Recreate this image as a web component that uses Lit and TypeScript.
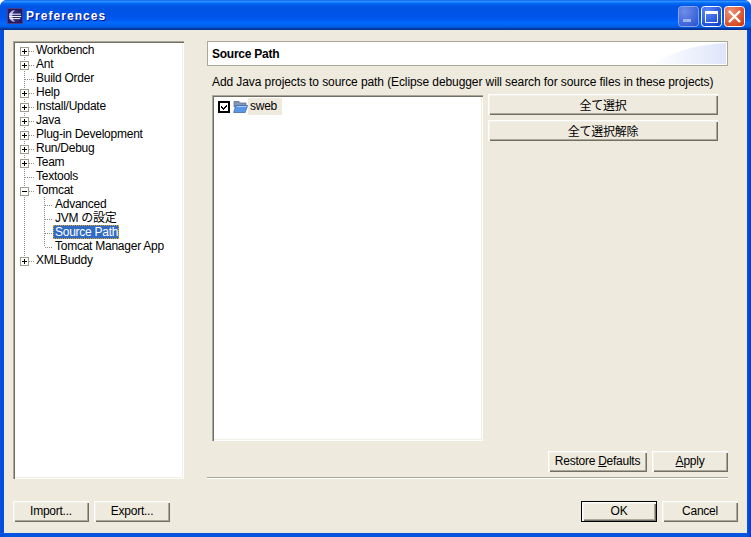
import { LitElement, html, css, svg } from "lit";
import { customElement } from "lit/decorators.js";

interface Row { label: string; level: number; kind: "plus" | "minus" | "leaf"; selected?: boolean; lastChild?: boolean; last?: boolean; first?: boolean }

const ROWS: Row[] = [
  { label: "Workbench", level: 0, kind: "plus", first: true },
  { label: "Ant", level: 0, kind: "plus" },
  { label: "Build Order", level: 0, kind: "leaf" },
  { label: "Help", level: 0, kind: "plus" },
  { label: "Install/Update", level: 0, kind: "plus" },
  { label: "Java", level: 0, kind: "plus" },
  { label: "Plug-in Development", level: 0, kind: "plus" },
  { label: "Run/Debug", level: 0, kind: "plus" },
  { label: "Team", level: 0, kind: "plus" },
  { label: "Textools", level: 0, kind: "leaf" },
  { label: "Tomcat", level: 0, kind: "minus" },
  { label: "Advanced", level: 1, kind: "leaf" },
  { label: "JVM の設定", level: 1, kind: "leaf" },
  { label: "Source Path", level: 1, kind: "leaf", selected: true },
  { label: "Tomcat Manager App", level: 1, kind: "leaf", lastChild: true },
  { label: "XMLBuddy", level: 0, kind: "plus", last: true },
];

function connector(r: Row) {
  const w = r.level === 0 ? 21 : 38;
  const dots = "stroke:#8f8d84;stroke-width:1;stroke-dasharray:1 1;fill:none";
  const parts = [];
  const y0 = r.first ? 8 : 0;
  const y1 = r.last ? 8 : 14;
  parts.push(svg`<line x1="9.5" x2="9.5" y1=${y0} y2=${y1} style=${dots}></line>`);
  if (r.level === 0) {
    parts.push(svg`<line x1="10" x2="20" y1="8.5" y2="8.5" style=${dots}></line>`);
  } else {
    parts.push(svg`<line x1="29.5" x2="29.5" y1="0" y2=${r.lastChild ? 8 : 14} style=${dots}></line>`);
    parts.push(svg`<line x1="30" x2="38" y1="8.5" y2="8.5" style=${dots}></line>`);
  }
  if (r.kind !== "leaf") {
    parts.push(svg`<rect x="5.5" y="4.5" width="8" height="8" fill="#fff" stroke="#a09d8f"></rect>`);
    parts.push(svg`<path d="M7 8.5h5" stroke="#000" fill="none"></path>`);
    if (r.kind === "plus") parts.push(svg`<path d="M9.5 6v5" stroke="#000" fill="none"></path>`);
  }
  return html`<svg class="conn" width=${w} height="14" shape-rendering="crispEdges">${parts}</svg>`;
}

@customElement("app-root")
export class AppRoot extends LitElement {
  static styles = css`
    :host {
      display: block;
      width: 751px;
      height: 537px;
      overflow: hidden;
      background: #fff;
      font: 12px "Liberation Sans", "Noto Sans CJK JP", sans-serif;
      letter-spacing: -0.25px;
      color: #000;
    }
    .window {
      width: 751px;
      height: 537px;
      display: flex;
      flex-direction: column;
      background: #0831d9;
      border-radius: 7px 7px 0 0;
      overflow: hidden;
    }
    .titlebar {
      height: 30px;
      flex: none;
      display: flex;
      align-items: center;
      padding: 2px 6px 0 7px;
      box-sizing: border-box;
      background: linear-gradient(180deg, #0058ee 0%, #3593ff 4%, #288eff 6%, #127dff 8%, #036ffc 10%, #0262ee 14%, #0057e5 20%, #0054e3 24%, #0055eb 56%, #005bf5 66%, #026afe 76%, #0062ef 86%, #0052d6 92%, #0040ab 94%, #003092 100%);
    }
    .title {
      margin-left: 3px;
      flex: 1;
      color: #fff;
      font-weight: bold;
      font-size: 12px;
      letter-spacing: 1.05px;
      text-shadow: 1px 1px 0 #0f1089;
    }
    .winbtns { display: flex; gap: 2px; }
    .winbtn { display: block; }
    .frame {
      flex: 1;
      display: flex;
      padding: 0 4px 4px;
      min-height: 0;
      background: linear-gradient(90deg, #0855dd 0, #0048e0 2px, #0855dd 4px, #0855dd calc(100% - 4px), #0048e0 calc(100% - 2px), #0831d9 100%);
    }
    .body {
      flex: 1;
      background: #eeeade;
      padding: 11px 9px;
      display: flex;
      flex-direction: column;
      min-width: 0;
    }
    .top { display: flex; height: 438px; gap: 23px; }
    .tree {
      width: 171px;
      box-sizing: border-box;
      background: #fff;
      padding: 2px;
      box-shadow: inset 1px 1px 0 #aca899, inset 2px 2px 0 #716f64, inset -1px -1px 0 #fff, inset -2px -2px 0 #f1efe2;
    }
    .row { display: flex; height: 14px; line-height: 14px; white-space: nowrap; }
    .conn { display: block; flex: none; }
    .lvl1 .lbl { padding-left: 2px; }
    .lvl1 .sel {
      background: #316ac5;
      color: #fff;
      outline: 1px dotted #e0a020;
      outline-offset: -1px;
      padding: 0 1px 0 2px;
    }
    .right { width: 521px; display: flex; flex-direction: column; }
    .header {
      position: relative;
      height: 25px;
      flex: none;
      box-sizing: border-box;
      border: 1px solid #aca899;
      background: #fff;
      display: flex;
      align-items: center;
      padding-left: 4px;
      font-weight: bold;
      overflow: hidden;
    }
    .shade { position: absolute; right: 1px; bottom: 1px; }
    .header span { position: relative; }
    .desc { height: 14px; line-height: 14px; margin: 9px 0 0 5px; white-space: nowrap; letter-spacing: -0.09px; }
    .content { display: flex; margin: 5px 0 0 5px; gap: 5px; align-items: flex-start; }
    .list {
      width: 271px;
      height: 346px;
      margin-top: 1px;
      box-sizing: border-box;
      background: #fff;
      padding: 3px 2px;
      box-shadow: inset 1px 1px 0 #aca899, inset 2px 2px 0 #716f64, inset -1px -1px 0 #fff, inset -2px -2px 0 #f1efe2;
    }
    .item { display: flex; align-items: center; height: 17px; padding-left: 4px; }
    .check { width: 12px; height: 12px; display: block; flex: none; }
    .folder { display: block; flex: none; margin-left: 3px; }
    .item-label { background: #eeeade; height: 17px; line-height: 17px; padding: 0 2px; width: 30px; }
    .side { display: flex; flex-direction: column; gap: 5px; width: 230px; }
    .btn {
      appearance: none;
      border: 0;
      margin: 0;
      padding: 0 0 1px;
      height: 21px;
      box-sizing: border-box;
      background: #eeeade;
      font: inherit;
      letter-spacing: inherit;
      color: #000;
      display: flex;
      align-items: center;
      justify-content: center;
      box-shadow: inset 1px 1px 0 #fff, inset 2px 2px 0 #f4f2e8, inset -1px -1px 0 #716f64, inset -2px -2px 0 #aca899;
    }
    .w76 { width: 76px; }
    .w99 { width: 99px; }
    .default { outline: 1px solid #000; outline-offset: -1px; box-shadow: inset 2px 2px 0 #fff, inset 3px 3px 0 #f4f2e8, inset -2px -2px 0 #716f64, inset -3px -3px 0 #aca899; }
    .spacer { flex: 1; }
    .actions { display: flex; justify-content: flex-end; gap: 5px; }
    .sep { margin-top: 5px; height: 2px; flex: none; background: linear-gradient(#aca899 50%, #fff 50%); }
    .bottom { display: flex; margin-top: 22px; gap: 5px; }
    .grow { flex: 1; }
  `;

  render() {
    return html`
      <div class="window">
        <div class="titlebar">
          <svg width="16" height="16" viewBox="0 0 16 16">
            <rect width="16" height="16" fill="#4a3a8c"></rect>
            <rect x="1" y="1" width="14" height="14" fill="#241a5c"></rect>
            <circle cx="8" cy="8" r="6" fill="#2a2a70"></circle>
            <path d="M8 2a6 6 0 0 0 0 12 8 8 0 0 1 0-12z" fill="#b9b4e6"></path>
            <path d="M2.4 6.2h11.4M2 8.5h12.2M2.6 10.6h10.6" stroke="#f2f2ff" stroke-width="1"></path>
            <path d="M11 2.8a6 6 0 0 1 0 10.4 6 6 0 0 0 0-10.4z" fill="#8a5aa0"></path>
          </svg>
          <div class="title">Preferences</div>
          <div class="winbtns">
            <svg class="winbtn" width="21" height="21" viewBox="0 0 21 21">
              <defs>
                <radialGradient id="bm" cx="30%" cy="25%" r="90%"><stop offset="0" stop-color="#6f8ee8"></stop><stop offset="1" stop-color="#2c56d4"></stop></radialGradient>
                <radialGradient id="bx" cx="30%" cy="25%" r="90%"><stop offset="0" stop-color="#5f8af5"></stop><stop offset="1" stop-color="#1040d0"></stop></radialGradient>
                <radialGradient id="bc" cx="30%" cy="25%" r="90%"><stop offset="0" stop-color="#f09078"></stop><stop offset="1" stop-color="#d03a10"></stop></radialGradient>
              </defs>
              <rect x=".5" y=".5" width="20" height="20" rx="3" fill="url(#bm)" stroke="#8aa4ea"></rect>
              <rect x="5" y="13" width="8" height="3" fill="#9fb4ec"></rect>
            </svg>
            <svg class="winbtn" width="21" height="21" viewBox="0 0 21 21">
              <rect x=".5" y=".5" width="20" height="20" rx="3" fill="url(#bx)" stroke="#fff"></rect>
              <path d="M4.5 5.5h12v11h-12z" fill="none" stroke="#fff"></path>
              <rect x="4" y="5" width="13" height="3" fill="#fff"></rect>
            </svg>
            <svg class="winbtn" width="21" height="21" viewBox="0 0 21 21">
              <rect x=".5" y=".5" width="20" height="20" rx="3" fill="url(#bc)" stroke="#fff"></rect>
              <path d="M5 5l11 11M16 5L5 16" stroke="#fff" stroke-width="2.4"></path>
            </svg>
          </div>
        </div>
        <div class="frame">
          <div class="body">
            <div class="top">
              <div class="tree">
                ${ROWS.map(
                  (r) => html`<div class="row ${r.level === 1 ? "lvl1" : ""}">
                    ${connector(r)}<span class="lbl ${r.selected ? "sel" : ""}">${r.label}</span>
                  </div>`
                )}
              </div>
              <div class="right">
                <div class="header">
                  <svg class="shade" width="74" height="23" viewBox="0 0 74 23">
                    <defs>
                      <linearGradient id="sh" x1="0" x2="1"><stop offset="0" stop-color="#fff"></stop><stop offset="1" stop-color="#dee5fb"></stop></linearGradient>
                    </defs>
                    <path d="M0 23C22 10 46 3 74 2V23Z" fill="url(#sh)"></path>
                  </svg>
                  <span>Source Path</span>
                </div>
                <div class="desc">Add Java projects to source path (Eclipse debugger will search for source files in these projects)</div>
                <div class="content">
                  <div class="list">
                    <div class="item">
                      <svg class="check" viewBox="0 0 12 12" shape-rendering="crispEdges">
                        <rect x="0" y="0" width="12" height="12" fill="#000"></rect>
                        <rect x="2" y="2" width="8" height="8" fill="#fff"></rect>
                        <path d="M3 5h1v1h1v1h1v-1h1v-1h1v-1h1v2h-1v1h-1v1h-1v1h-1v-1h-1v-1h-1z" fill="#000"></path>
                      </svg>
                      <svg class="folder" width="15" height="13" viewBox="0 0 15 13">
                        <path d="M1 1.5h5l1.2 1.5h5.8v4H1z" fill="#8496b4" stroke="#5f6f90" stroke-width=".8"></path>
                        <path d="M.6 12.5L3 5.5h11.6L12.2 12.5z" fill="#5a96e6" stroke="#3f6ab0" stroke-width=".8"></path>
                        <path d="M3.6 6.5h10" stroke="#a8ccf5"></path>
                      </svg>
                      <span class="item-label">sweb</span>
                    </div>
                  </div>
                  <div class="side">
                    <button class="btn">全て選択</button>
                    <button class="btn">全て選択解除</button>
                  </div>
                </div>
                <div class="spacer"></div>
                <div class="actions">
                  <button class="btn w99"><span>Restore <u>D</u>efaults</span></button>
                  <button class="btn w76"><span><u>A</u>pply</span></button>
                </div>
                <div class="sep"></div>
              </div>
            </div>
            <div class="bottom">
              <button class="btn w76">Import...</button>
              <button class="btn w76">Export...</button>
              <div class="grow"></div>
              <button class="btn w76 default">OK</button>
              <button class="btn w76">Cancel</button>
            </div>
          </div>
        </div>
      </div>
    `;
  }
}
